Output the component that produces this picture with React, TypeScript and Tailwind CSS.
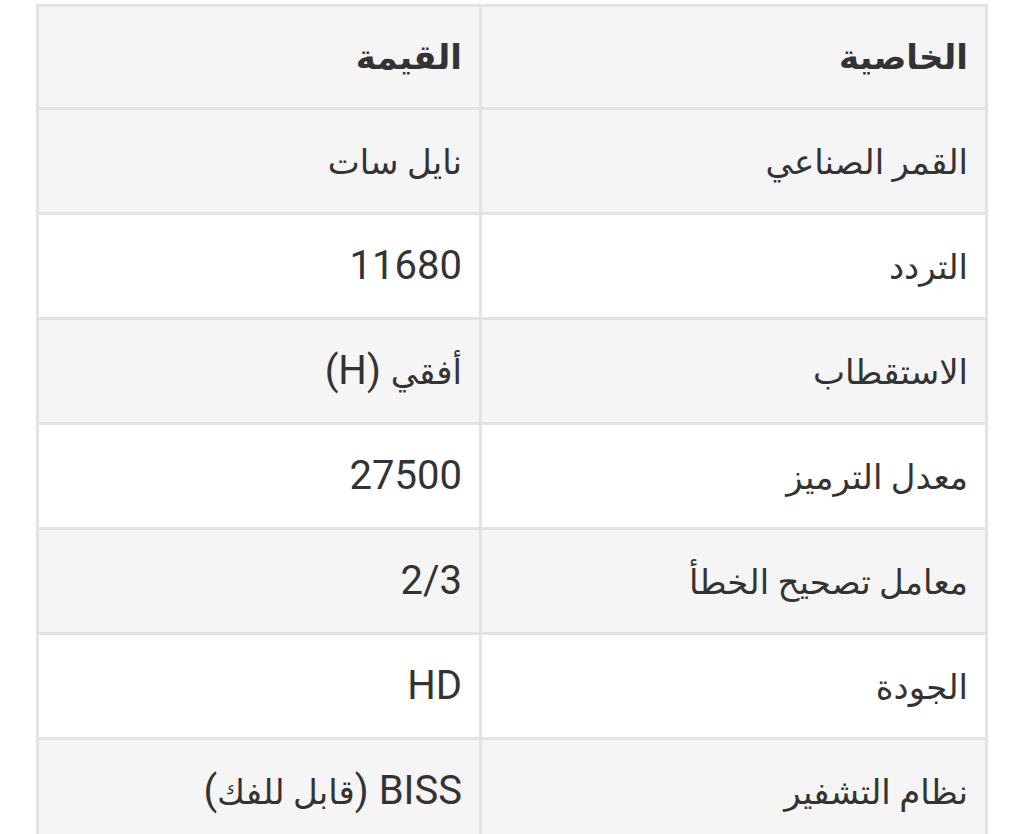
import React from "react";

const rows: [string, string][] = [
  ["القمر الصناعي", "نايل سات"],
  ["التردد", "11680"],
  ["الاستقطاب", "أفقي (H)"],
  ["معدل الترميز", "27500"],
  ["معامل تصحيح الخطأ", "2/3"],
  ["الجودة", "HD"],
  ["نظام التشفير", "BISS (قابل للفك)"],
];

function Mixed({ text }: { text: string }) {
  const parts = text.split(/([\u0600-\u06FF]+(?:\s+[\u0600-\u06FF]+)*)/).filter((p) => p.length > 0);
  return (
    <>
      {parts.map((p, i) =>
        /[\u0600-\u06FF]/.test(p) ? (
          <span key={i} className="text-[34px]">
            {p}
          </span>
        ) : (
          <span key={i}>{p}</span>
        )
      )}
    </>
  );
}

export default function App() {
  return (
    <div
      className="w-[1024px] h-[834px] overflow-hidden bg-white pt-[4px] px-[36px]"
      style={{ fontFamily: 'Roboto, "DejaVu Sans", "Noto Sans", sans-serif' }}
    >
      <div dir="rtl" className="bg-[#e3e3e3] p-[3px] grid grid-cols-[503px_1fr] gap-[3px] text-[#333333] text-[40px]">
        <div className="h-[100px] bg-[#f5f5f5] flex items-center px-[17px] font-semibold">
          <Mixed text="الخاصية" />
        </div>
        <div className="h-[100px] bg-[#f5f5f5] flex items-center px-[17px] font-semibold">
          <Mixed text="القيمة" />
        </div>
        {rows.map(([k, v], i) => {
          const bg = i % 2 === 0 ? "bg-[#f5f5f5]" : "bg-white";
          return (
            <React.Fragment key={k}>
              <div className={`h-[102px] ${bg} flex items-center px-[17px]`}>
                <span>
                  <Mixed text={k} />
                </span>
              </div>
              <div className={`h-[102px] ${bg} flex items-center px-[17px]`}>
                <span>
                  <Mixed text={v} />
                </span>
              </div>
            </React.Fragment>
          );
        })}
      </div>
    </div>
  );
}
